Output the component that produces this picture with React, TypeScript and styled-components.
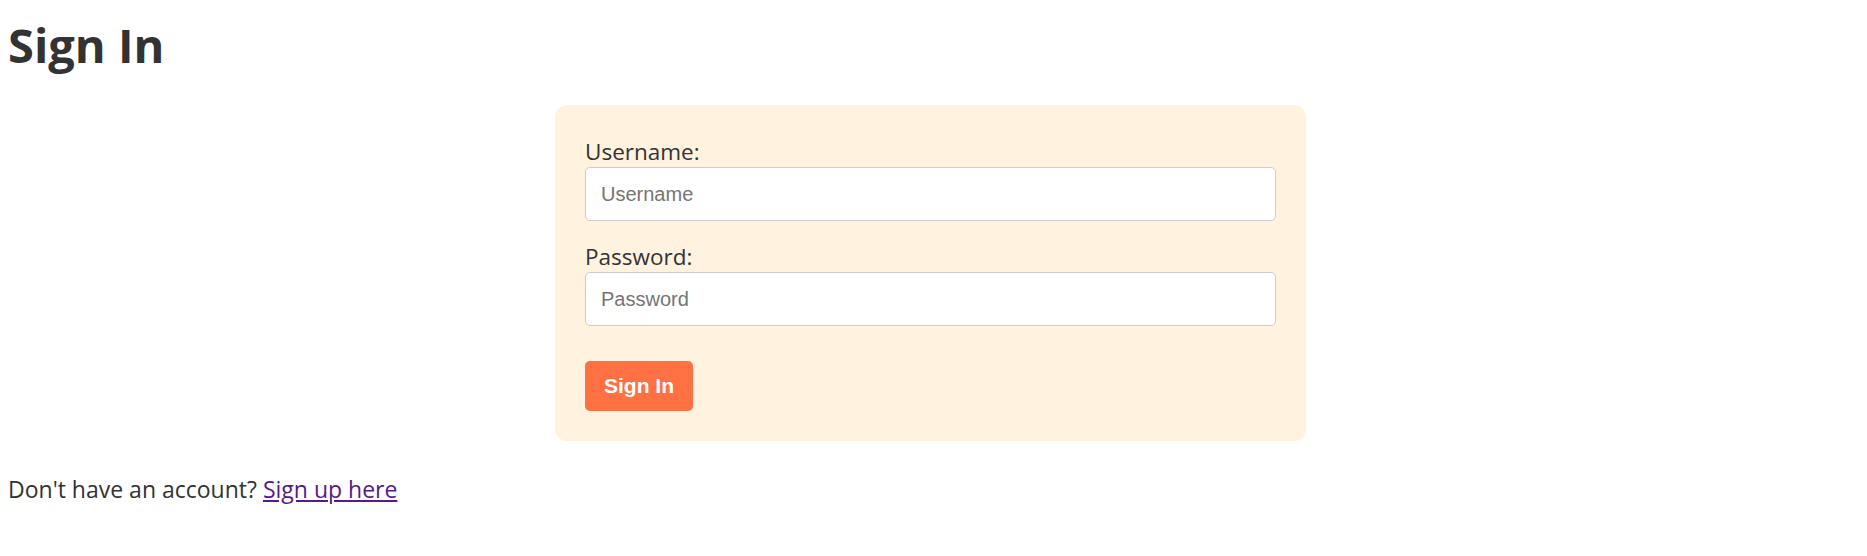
import React, { useState } from 'react';
import styled, { createGlobalStyle } from 'styled-components';

const GlobalStyle = createGlobalStyle`
  body {
    margin: 8px;
    background: #ffffff;
    color: #333333;
    font-family: "Segoe UI", "Open Sans", "Noto Sans", sans-serif;
    font-size: 23px;
  }
`;

const Page = styled.div`
  display: flex;
  flex-direction: column;
  padding-right: 6px;
`;

const Title = styled.h1`
  margin: 5px 0 28px;
  font-size: 47px;
  line-height: 64px;
  font-weight: 700;
  color: #333333;
`;

const Card = styled.form`
  box-sizing: border-box;
  width: 751px;
  margin: 0 auto;
  padding: 31px 30px 30px;
  background: #fff2df;
  border-radius: 12px;
  display: flex;
  flex-direction: column;
`;

const Field = styled.div`
  display: flex;
  flex-direction: column;
  margin-bottom: 20px;
`;

const Label = styled.label`
  font-size: 22.5px;
  line-height: 31px;
  color: #333333;
`;

const Input = styled.input`
  box-sizing: border-box;
  width: 100%;
  height: 54px;
  padding: 0 15px;
  border: 1px solid #cccccc;
  border-radius: 5px;
  background: #ffffff;
  font-family: "Liberation Sans", Arial, sans-serif;
  font-size: 20px;
  color: #333333;

  &::placeholder {
    color: #757575;
  }
`;

const SubmitButton = styled.button`
  align-self: flex-start;
  height: 50px;
  margin-top: 15px;
  padding: 0 19px;
  border: none;
  border-radius: 5px;
  background: #ff7043;
  color: #ffffff;
  font-family: "Liberation Sans", Arial, sans-serif;
  font-size: 21px;
  font-weight: 700;
  cursor: pointer;
`;

const Footer = styled.p`
  margin: 32px 0 0;
  font-size: 23px;
  line-height: 32px;
`;

const SignUpLink = styled.a`
  color: #551a8b;
  text-decoration: underline;
`;

const App: React.FC = () => {
  const [username, setUsername] = useState('');
  const [password, setPassword] = useState('');

  const handleSubmit = (e: React.FormEvent) => {
    e.preventDefault();
  };

  return (
    <>
      <GlobalStyle />
      <Page>
        <Title>Sign In</Title>
        <Card onSubmit={handleSubmit}>
          <Field>
            <Label htmlFor="username">Username:</Label>
            <Input
              id="username"
              type="text"
              placeholder="Username"
              value={username}
              onChange={(e) => setUsername(e.target.value)}
            />
          </Field>
          <Field>
            <Label htmlFor="password">Password:</Label>
            <Input
              id="password"
              type="password"
              placeholder="Password"
              value={password}
              onChange={(e) => setPassword(e.target.value)}
            />
          </Field>
          <SubmitButton type="submit">Sign In</SubmitButton>
        </Card>
        <Footer>
          Don't have an account? <SignUpLink href="#signup">Sign up here</SignUpLink>
        </Footer>
      </Page>
    </>
  );
};

export default App;
